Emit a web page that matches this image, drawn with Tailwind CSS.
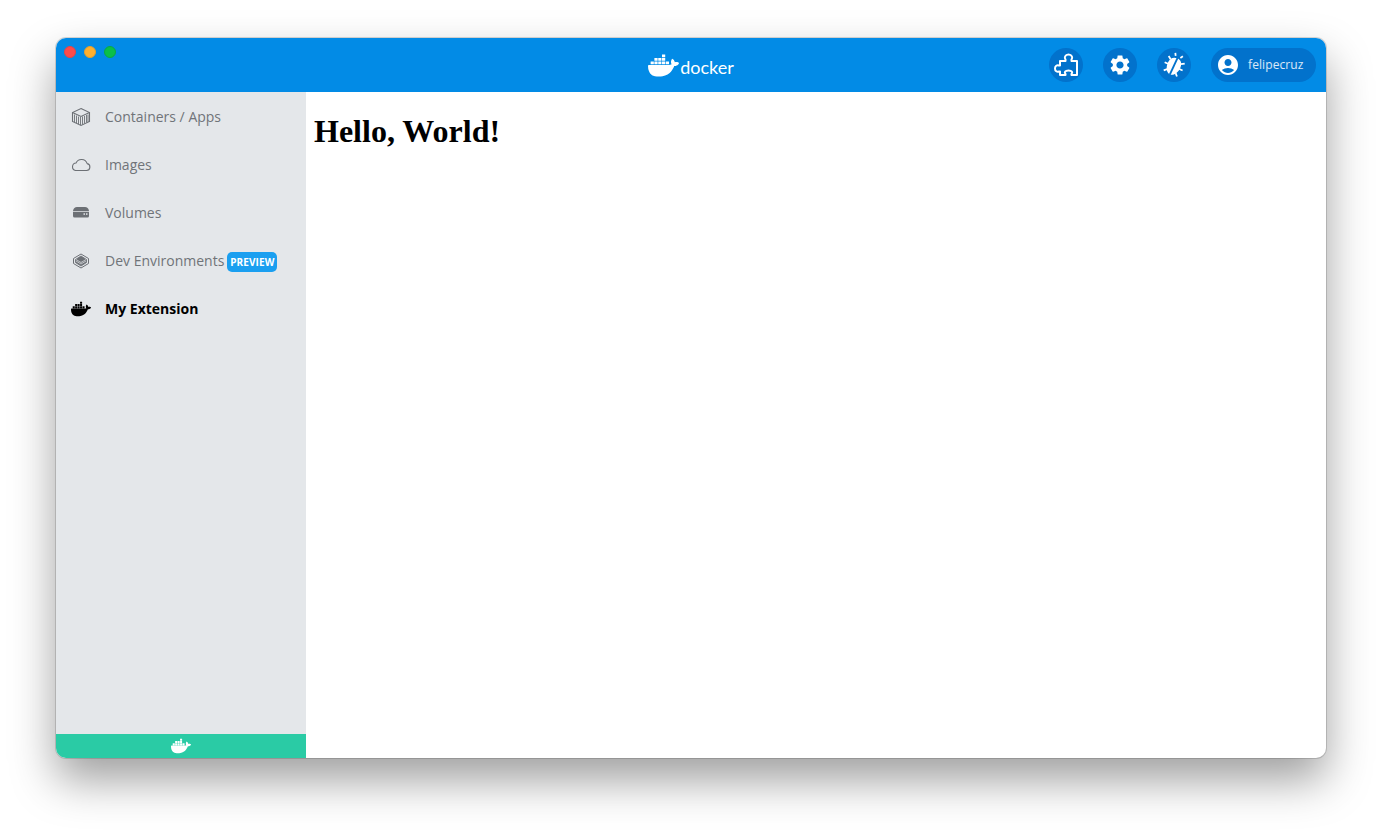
<!doctype html>
<html>
<head>
<meta charset="utf-8">
<script src="https://cdn.jsdelivr.net/npm/@tailwindcss/browser@4"></script>
</head>
<body class="bg-white font-['Open_Sans',sans-serif] h-[832px] pt-[38px] pl-[56px]">
<svg class="hidden"><defs>
<symbol id="whale" viewBox="0 0 24 24"><path d="M13.983 11.078h2.119a.186.186 0 00.186-.185V9.006a.186.186 0 00-.186-.186h-2.119a.185.185 0 00-.185.185v1.888c0 .102.083.185.185.185m-2.954-5.43h2.118a.186.186 0 00.186-.186V3.574a.186.186 0 00-.186-.185h-2.118a.185.185 0 00-.185.185v1.888c0 .102.082.185.185.185m0 2.716h2.118a.187.187 0 00.186-.186V6.29a.186.186 0 00-.186-.185h-2.118a.185.185 0 00-.185.185v1.887c0 .102.082.185.185.186m-2.93 0h2.12a.186.186 0 00.184-.186V6.29a.185.185 0 00-.185-.185H8.1a.185.185 0 00-.185.185v1.887c0 .102.083.185.185.186m-2.964 0h2.119a.186.186 0 00.185-.186V6.29a.185.185 0 00-.185-.185H5.136a.186.186 0 00-.186.185v1.887c0 .102.084.185.186.186m5.893 2.715h2.118a.186.186 0 00.186-.185V9.006a.186.186 0 00-.186-.186h-2.118a.185.185 0 00-.185.185v1.888c0 .102.082.185.185.185m-2.93 0h2.12a.185.185 0 00.184-.185V9.006a.185.185 0 00-.184-.186h-2.12a.185.185 0 00-.184.185v1.888c0 .102.083.185.185.185m-2.964 0h2.119a.185.185 0 00.185-.185V9.006a.185.185 0 00-.184-.186h-2.12a.186.186 0 00-.186.186v1.887c0 .102.084.185.186.185m-2.92 0h2.12a.185.185 0 00.184-.185V9.006a.185.185 0 00-.184-.186h-2.12a.185.185 0 00-.184.185v1.888c0 .102.082.185.185.185M23.763 9.89c-.065-.051-.672-.51-1.954-.51-.338.001-.676.03-1.01.087-.248-1.7-1.653-2.53-1.716-2.566l-.344-.199-.226.327c-.284.438-.49.922-.612 1.43-.23.97-.09 1.882.403 2.661-.595.332-1.55.413-1.744.42H.751a.751.751 0 00-.75.748 11.376 11.376 0 00.692 4.062c.545 1.428 1.355 2.48 2.41 3.124 1.18.723 3.1 1.137 5.275 1.137.983.003 1.963-.086 2.93-.266a12.248 12.248 0 003.823-1.389c.98-.567 1.86-1.288 2.61-2.136 1.252-1.418 1.998-2.997 2.553-4.4h.221c1.372 0 2.215-.549 2.68-1.009.309-.293.55-.65.707-1.046l.098-.288Z"/></symbol>
</defs></svg>

<div class="w-[1270px] h-[720px] relative rounded-[10px] overflow-hidden flex flex-col bg-white shadow-[0_0_0_1px_rgba(0,0,0,0.14),0_22px_45px_0_rgba(0,0,0,0.38)]">
  <header class="h-[54px] shrink-0 bg-[#028BE6] grid grid-cols-[1fr_auto_1fr] items-center">
    <div class="flex gap-2 self-start pt-2 pl-2">
      <span class="w-3 h-3 rounded-full bg-[#FC4B4B] border border-[#E54545]"></span>
      <span class="w-3 h-3 rounded-full bg-[#FDB02F] border border-[#E59F2C]"></span>
      <span class="w-3 h-3 rounded-full bg-[#0ABF4B] border border-[#0CA844]"></span>
    </div>
    <div class="flex items-center gap-px text-white">
      <svg class="w-[31px] h-[31px] fill-white"><use href="#whale"/></svg>
      <span class="font-['Lato',sans-serif] font-normal text-[18px] leading-none mt-[3px]">docker</span>
    </div>
    <div class="flex justify-end items-center gap-5 pr-[10px] -mt-[1px]">
      <button class="w-[34px] h-[34px] rounded-full bg-[#0272CC] flex items-center justify-center">
        <svg viewBox="0 0 24 24" class="w-6 h-6 fill-none stroke-white" stroke-width="2" stroke-linejoin="round"><path d="M6 8H11.500V6.500C10 5 11 1.500 14.500 1.500 18 1.500 19 5 17.500 6.500V8H23V22H17.500V21C19 19.500 18 17.500 14.500 17.500 11 17.500 10 19.500 11.500 21V22H6V18.500H5C3 19.500 1 18 1 15.500 1 13 3 11.500 5 12.500H6Z"/></svg>
      </button>
      <button class="w-[34px] h-[34px] rounded-full bg-[#0272CC] flex items-center justify-center">
        <svg viewBox="0 0 24 24" class="w-[24px] h-[24px] fill-white"><path d="M19.14 12.94c.04-.3.06-.61.06-.94 0-.32-.02-.64-.07-.94l2.03-1.58c.18-.14.23-.41.12-.61l-1.92-3.32c-.12-.22-.37-.29-.59-.22l-2.39.96c-.5-.38-1.03-.7-1.62-.94l-.36-2.54c-.04-.24-.24-.41-.48-.41h-3.84c-.24 0-.43.17-.47.41l-.36 2.54c-.59.24-1.13.57-1.62.94l-2.39-.96c-.22-.08-.47 0-.59.22L2.74 8.87c-.12.21-.08.47.12.61l2.03 1.58c-.05.3-.09.63-.09.94s.02.64.07.94l-2.03 1.58c-.18.14-.23.41-.12.61l1.92 3.32c.12.22.37.29.59.22l2.39-.96c.5.38 1.03.7 1.62.94l.36 2.54c.05.24.24.41.48.41h3.84c.24 0 .44-.17.47-.41l.36-2.54c.59-.24 1.13-.56 1.62-.94l2.39.96c.22.08.47 0 .59-.22l1.92-3.32c.12-.22.07-.47-.12-.61l-2.01-1.58zM12 15.6c-1.98 0-3.6-1.62-3.6-3.6s1.62-3.6 3.6-3.6 3.6 1.62 3.6 3.6-1.62 3.6-3.6 3.6z"/></svg>
      </button>
      <button class="w-[34px] h-[34px] rounded-full bg-[#0272CC] flex items-center justify-center">
        <svg viewBox="0 0 24 24" class="w-[25px] h-[25px]">
          <g transform="rotate(25 12 12)">
            <path d="M12 5.500c4.200 0 6.500 3 6.500 7.500S16 22.500 12 22.500 5.500 17.500 5.500 13 7.800 5.500 12 5.500z" fill="#fff"/>
            <path d="M9.500 4 8 1.500M14.500 4 16 1.500M6.500 9 3.500 7M17.500 9l3-2M6 14H2.500M18 14h3.500M7.500 19 5 21.500M16.500 19 19 21.500" stroke="#fff" stroke-width="1.700" fill="none"/>
            <path d="M12 5V23" stroke="#0272CC" stroke-width="1.800"/>
          </g>
        </svg>
      </button>
      <button class="w-[105px] h-[34px] rounded-full bg-[#0272CC] flex items-center pl-[5px] gap-2 text-white">
        <svg viewBox="0 0 24 24" class="w-6 h-6 fill-white shrink-0"><path d="M12 2C6.48 2 2 6.48 2 12s4.48 10 10 10 10-4.48 10-10S17.52 2 12 2zm0 4c1.93 0 3.500 1.570 3.500 3.500S13.930 13 12 13s-3.500-1.570-3.500-3.500S10.070 6 12 6zm0 14c-2.030 0-4.430-.820-6.140-2.880C7.550 15.800 9.680 15 12 15s4.450.800 6.140 2.120C16.430 19.180 14.030 20 12 20z"/></svg>
        <span class="text-[12px] leading-none tracking-[0.1px] text-white/85 pt-px">felipecruz</span>
      </button>
    </div>
  </header>

  <div class="flex-1 flex min-h-0">
    <aside class="w-[250px] shrink-0 bg-[#E4E7EA] flex flex-col">
      <nav class="flex-1 pt-px text-[14px] text-[#707479]">
        <a class="h-12 flex items-center pl-[15px] gap-[14px]">
          <svg viewBox="0 0 20 20" class="w-5 h-5 shrink-0 fill-none stroke-[#6C7075]" stroke-width="1.100"><path d="M10 1.500 18.500 5.500v9L10 18.500 1.500 14.500v-9z"/><path d="M1.500 5.500 10 9.500l8.500-4"/><path d="M3.500 7.500v7.500M5.500 8.500v7.500M7.500 9.500v7.500M9.500 10v8M11.500 9.500v8M13.500 9v7.500M15.500 8v7.500M17 7.500v7.500" stroke-width=".9"/></svg>
          <span class="pb-[2px]">Containers / Apps</span>
        </a>
        <a class="h-12 flex items-center pl-[15px] gap-[14px]">
          <svg viewBox="0 0 20 20" class="w-5 h-5 shrink-0 fill-none stroke-[#6C7075]" stroke-width="1.100"><path d="M4.500 15.500H15.500a3.500 3.500 0 00.700-6.900 6 6 0 00-11.200-.600 3.800 3.800 0 00-.500 7.500z"/></svg>
          <span class="pb-[2px]">Images</span>
        </a>
        <a class="h-12 flex items-center pl-[15px] gap-[14px]">
          <svg viewBox="0 0 20 20" class="w-5 h-5 shrink-0"><path d="M2 8C2.300 5.500 4 4 6 4H14C16 4 17.700 5.500 18 8z" fill="#6C7075"/><path d="M2 8.700H18V13A1.500 1.500 0 0116.500 14.500H3.500A1.500 1.500 0 012 13z" fill="#6C7075"/><rect x="12.500" y="10.300" width="1.500" height="1.500" fill="#E4E7EA"/><rect x="15" y="10.300" width="1.500" height="1.500" fill="#E4E7EA"/></svg>
          <span class="pb-[2px]">Volumes</span>
        </a>
        <a class="h-12 flex items-center pl-[15px] gap-[14px]">
          <svg viewBox="0 0 20 20" class="w-5 h-5 shrink-0 fill-none stroke-[#6C7075]"><path d="M10 3 17.500 7.500v5L10 17 2.500 12.500v-5z" stroke-width="1"/><path d="M10 5 15.500 8.500v3L10 15 4.500 11.500v-3z" fill="#6C7075" stroke-width=".8"/><path d="M5 10l5 3 5-3M5 8.500l5 3 5-3" stroke="#E4E7EA" stroke-width=".7"/></svg>
          <span class="whitespace-nowrap pb-[2px]">Dev Environments</span>
          <span class="ml-[-11px] mt-[2px] bg-[#1A9FF0] text-white text-[10px] font-bold leading-none rounded-[5px] h-5 w-[50px] flex items-center justify-center tracking-[0.1px] shrink-0">PREVIEW</span>
        </a>
        <a class="h-12 flex items-center pl-[15px] gap-[14px] text-black font-bold">
          <svg class="w-5 h-5 shrink-0 fill-black"><use href="#whale"/></svg>
          <span class="pb-[2px]">My Extension</span>
        </a>
      </nav>
      <div class="h-6 shrink-0 bg-[#2ACBA5] flex items-center justify-center">
        <svg class="w-[20px] h-[20px] fill-white"><use href="#whale"/></svg>
      </div>
    </aside>
    <main class="flex-1 p-2 min-w-0">
      <h1 class="font-['Liberation_Serif',serif] font-bold text-[32px] leading-[37px] text-black mt-[13px]">Hello, World!</h1>
    </main>
  </div>
</div>
</body>
</html>
